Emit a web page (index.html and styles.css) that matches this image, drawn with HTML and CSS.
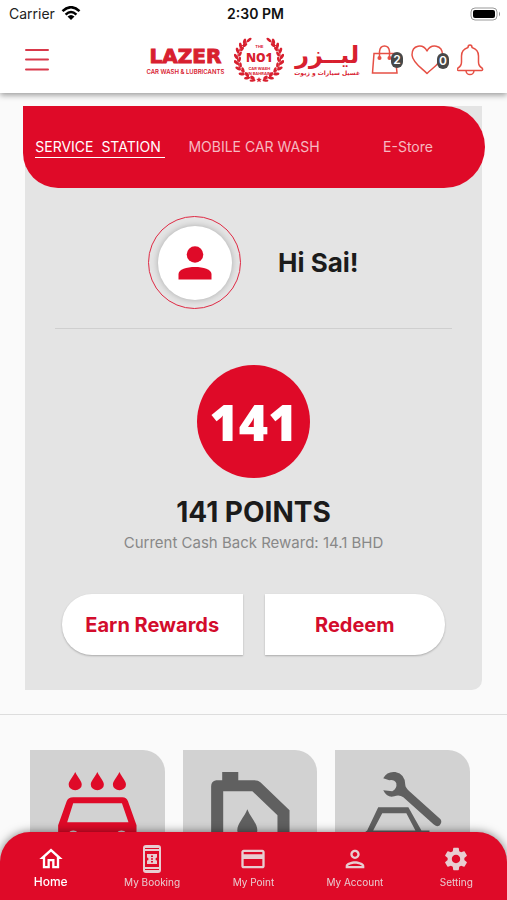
FILE: index.html
```html
<!DOCTYPE html>
<html lang="en">
<head>
<meta charset="utf-8">
<meta name="viewport" content="width=device-width, initial-scale=1">
<title>Lazer Car Wash</title>
<link rel="stylesheet" href="styles.css">
</head>
<body>
<header class="top">
  <div class="status">
    <div class="carrier">Carrier
      <svg width="20" height="15" viewBox="0 0 20 15" fill="none" stroke="#000" stroke-width="2.5"><path d="M1.500 5.200Q10-2.800 18.500 5.200M4.600 8.600Q10 3.500 15.400 8.600"/><path d="M6.500 10.500Q10 7.300 13.500 10.500L10 14Z" fill="#000" stroke="none"/></svg>
    </div>
    <time class="clock">2:30 PM</time>
    <div class="power">
      <svg width="32" height="14" viewBox="0 0 32 14"><rect x="1" y="1" width="26" height="12" rx="4" fill="none" stroke="#999"/><rect x="3" y="3" width="22" height="8" rx="2"/><path d="M29 4.500Q31 7 29 9.500Z" fill="#888"/></svg>
    </div>
  </div>
  <div class="bar">
    <button class="icon-btn menu" aria-label="Menu"><svg width="26" height="24" viewBox="0 0 26 24" stroke="#d9384a" stroke-width="2" stroke-linecap="round"><path d="M2 2H24M2 11.500H24M2 21.500H24"/></svg></button>
    <div class="brand">
      <div class="brand-en"><strong>LAZER</strong><span>CAR WASH &amp; LUBRICANTS</span></div>
      <div class="award">
        <svg class="wreath" width="50" height="46" viewBox="0 0 50 46" fill="#d8202f" stroke="#d8202f">
          <defs>
            <g id="branch">
              <path d="M16 3Q3 9 3.500 23Q5 38 21 43" fill="none" stroke-width="1"/>
              <g stroke="none">
                <ellipse cx="15" cy="3" rx="3" ry="1.400" transform="rotate(-40 15 3)"/>
                <ellipse cx="10.500" cy="4.500" rx="3" ry="1.500" transform="rotate(-75 10.500 4.500)"/>
                <ellipse cx="11" cy="8" rx="2.600" ry="1.400" transform="rotate(-35 11 8)"/>
                <ellipse cx="6.500" cy="8.500" rx="3" ry="1.500" transform="rotate(-100 6.500 8.500)"/>
                <ellipse cx="8" cy="12" rx="2.600" ry="1.400" transform="rotate(-50 8 12)"/>
                <ellipse cx="3.500" cy="13.500" rx="3" ry="1.500" transform="rotate(70 3.500 13.500)"/>
                <ellipse cx="6" cy="17" rx="2.800" ry="1.400" transform="rotate(-60 6 17)"/>
                <ellipse cx="2" cy="19.500" rx="3" ry="1.500" transform="rotate(58 2 19.500)"/>
                <ellipse cx="5.500" cy="22.500" rx="2.800" ry="1.400" transform="rotate(-75 5.500 22.500)"/>
                <ellipse cx="2.200" cy="25.500" rx="3" ry="1.500" transform="rotate(45 2.200 25.500)"/>
                <ellipse cx="6.500" cy="28" rx="2.800" ry="1.400" transform="rotate(-95 6.500 28)"/>
                <ellipse cx="4" cy="31.500" rx="3" ry="1.500" transform="rotate(30 4 31.500)"/>
                <ellipse cx="9" cy="33" rx="2.800" ry="1.400" transform="rotate(70 9 33)"/>
                <ellipse cx="7.500" cy="37" rx="3" ry="1.500" transform="rotate(10 7.500 37)"/>
                <ellipse cx="13" cy="37.500" rx="2.800" ry="1.400" transform="rotate(50 13 37.500)"/>
                <ellipse cx="13" cy="41" rx="3" ry="1.500" transform="rotate(-8 13 41)"/>
                <ellipse cx="18.500" cy="40.500" rx="2.600" ry="1.400" transform="rotate(35 18.500 40.500)"/>
                <ellipse cx="18.500" cy="43.500" rx="3" ry="1.300" transform="rotate(-5 18.500 43.500)"/>
              </g>
            </g>
          </defs>
          <use href="#branch"/><use href="#branch" transform="matrix(-1 0 0 1 50 0)"/>
          <path d="M25 40l.8 1.800 2 .2-1.500 1.300.5 2L25 44.200l-1.800 1.100.5-2L22.200 42l2-.2z" stroke="none"/>
        </svg>
        <div class="award-text"><span>THE</span><b>NO1</b><span>CAR WASH</span><span>IN BAHRAIN</span></div>
      </div>
      <div class="brand-ar" lang="ar" dir="rtl"><strong>ليــزر</strong><span>غسيل سيارات و زيوت</span></div>
    </div>
    <div class="actions">
      <button class="icon-btn bag" aria-label="Shopping bag">
        <svg width="28" height="32" viewBox="0 0 28 32" fill="none" stroke="#e65045" stroke-width="1.500"><path d="M3 9.500H24L26 29H1.500ZM8.500 14V7.500Q9 2 13.500 2T18.500 7.500V14"/><circle cx="8.500" cy="14" r="1.300" fill="#e65045"/><circle cx="18.500" cy="14" r="1.300" fill="#e65045"/></svg>
        <span class="badge">2</span>
      </button>
      <button class="icon-btn heart" aria-label="Favourites">
        <svg width="34" height="30" viewBox="0 0 34 30" fill="none" stroke="#e65045" stroke-width="1.500" stroke-linejoin="round"><path d="M16 28.500C12 24 1.500 18 1 10C1-.5 12-1.500 16 6C20-1.500 31.500-.5 31.500 10C31 18 20 24 16 28.500Z"/></svg>
        <span class="badge">0</span>
      </button>
      <button class="icon-btn bell" aria-label="Notifications">
        <svg width="28" height="32" viewBox="0 0 28 32" fill="none" stroke="#e65045" stroke-width="1.500" stroke-linejoin="round"><path d="M11 3.500Q11 1 13 1T15 3.500Q21.500 5.500 21.500 12V18Q21.500 22 25 24Q26.500 26 24.500 26.500H1.500Q-.5 26 1 24Q4.500 22 4.500 18V12Q4.500 5.500 11 3.500ZM9 27Q9.500 30.500 13 30.500T17 27"/></svg>
      </button>
    </div>
  </div>
</header>
<main>
  <section class="rewards">
    <nav class="tabs">
      <a class="tab active" href="#station">SERVICE&nbsp; STATION</a>
      <a class="tab" href="#mobile">MOBILE CAR WASH</a>
      <a class="tab" href="#store">E-Store</a>
    </nav>
    <div class="greeting">
      <div class="avatar"><div class="avatar-inner">
        <svg width="34" height="34" viewBox="0 0 34 34" fill="#df0a28"><circle cx="17" cy="8.500" r="8.300"/><path d="M.5 33.500V28C.5 18.500 33.500 18.500 33.500 28V33.500Z"/></svg>
      </div></div>
      <h1>Hi Sai!</h1>
    </div>
    <div class="score">
      <div class="disc">141</div>
      <h2>141 POINTS</h2>
      <p>Current Cash Back Reward: 14.1 BHD</p>
    </div>
    <div class="buttons">
      <button class="pill left">Earn Rewards</button>
      <button class="pill right">Redeem</button>
    </div>
  </section>
  <section class="services">
    <a class="service" href="#wash" aria-label="Car wash">
      <svg viewBox="0 0 134 134" fill="#df0a28"><path id="drop" d="M45 22C42 28 38.500 31 38.500 34.500A6.500 5.500 0 0 0 51.500 34.500C51.500 31 48 28 45 22Z"/><use href="#drop" x="22"/><use href="#drop" x="44"/><path fill-rule="evenodd" d="M43 47H92Q96 47 97.500 51L106 75V112H96V104H38V112H28V75L36.500 51Q38 47 43 47ZM43 53L37 72H98L91.500 53ZM43 80a5 5 0 1 0 .1 0ZM91 80a5 5 0 1 0 .1 0Z"/></svg>
    </a>
    <a class="service" href="#oil" aria-label="Oil change">
      <svg viewBox="0 0 134 134" fill="#606060"><path fill-rule="evenodd" d="M39 22H55V30H71Q75 30 77 32L106 60V112H28V36Q28 31 33 30H39ZM40 41V102H94V65L69 41Z"/><path d="M64 59C61 67 54 73 54 80A10 10 0 0 0 74 80C74 73 67 67 64 59Z"/></svg>
    </a>
    <a class="service" href="#repair" aria-label="Repair">
      <svg viewBox="0 0 134 134" fill="#606060"><path d="M48 28Q52 21 60 22Q70 24 70 35Q70 37 74 41L105 69Q107 72 104 75Q101 77 98 74L68 47Q64 44 59 46Q52 48 48 40L57 41Q62 38 61 33Q59 29 54 30Z"/><path fill-rule="evenodd" d="M43 57H73L86 80H94V112H82V104H36V112H24V86L32 80ZM47 63L38 80H80L71 63Z"/></svg>
    </a>
  </section>
</main>
<nav class="bottom">
  <a class="item current" href="#home"><svg viewBox="0 0 24 24"><path d="M12 5.700l5 4.500V18h-2v-6H9v6H7v-7.800l5-4.500M12 3L2 12h3v8h6v-6h2v6h6v-8h3L12 3z"/></svg>Home</a>
  <a class="item" href="#booking"><svg class="ticket" viewBox="0 0 24 28"><path fill-rule="evenodd" d="M6 0H18Q21 0 21 3V25Q21 28 18 28H6Q3 28 3 25V3Q3 0 6 0ZM5 3V4H19V3ZM5 6V22H19V6ZM5 24V25H19V24Z"/><path fill-rule="evenodd" d="M7 9H17V12.500A1.500 1.500 0 0 0 17 15.500V19H7V15.500A1.500 1.500 0 0 0 7 12.500ZM11 10.500V12H13V10.500ZM11 13.300V14.700H13V13.300ZM11 16V17.500H13V16Z"/></svg>My Booking</a>
  <a class="item" href="#point"><svg viewBox="0 0 24 24"><path d="M20 4H4c-1.100 0-2 .9-2 2v12c0 1.100.9 2 2 2h16c1.100 0 2-.9 2-2V6c0-1.100-.9-2-2-2zm0 14H4v-6h16v6zm0-10H4V6h16v2z"/></svg>My Point</a>
  <a class="item" href="#account"><svg viewBox="0 0 24 24"><path d="M12 6c1.100 0 2 .9 2 2s-.9 2-2 2-2-.9-2-2 .9-2 2-2m0 10c2.700 0 5.800 1.290 6 2H6c.23-.72 3.310-2 6-2m0-12C9.790 4 8 5.790 8 8s1.790 4 4 4 4-1.790 4-4-1.790-4-4-4zm0 10c-2.670 0-8 1.340-8 4v2h16v-2c0-2.660-5.330-4-8-4z"/></svg>My Account</a>
  <a class="item" href="#setting"><svg viewBox="0 0 24 24"><path d="M19.140 12.940c.04-.3.06-.61.060-.94 0-.32-.02-.64-.07-.94l2.030-1.580c.18-.14.23-.41.120-.61l-1.920-3.320c-.12-.22-.37-.29-.59-.22l-2.390.96c-.5-.38-1.030-.7-1.620-.94l-.36-2.540c-.04-.24-.24-.41-.48-.41h-3.840c-.24 0-.43.17-.47.410l-.36 2.540c-.59.240-1.130.570-1.620.94l-2.390-.96c-.22-.08-.47 0-.59.220L2.740 8.870c-.12.210-.08.470.12.610l2.030 1.580c-.05.300-.09.630-.09.940s.02.640.07.940l-2.030 1.580c-.18.140-.23.410-.12.610l1.920 3.320c.12.220.37.290.59.220l2.390-.96c.5.380 1.030.700 1.620.940l.36 2.540c.05.240.24.410.48.410h3.840c.24 0 .44-.17.470-.41l.36-2.540c.59-.24 1.130-.56 1.620-.94l2.390.96c.22.080.47 0 .59-.22l1.920-3.320c.12-.22.070-.47-.12-.61l-2.010-1.580zM12 15.600c-1.980 0-3.600-1.620-3.600-3.600s1.620-3.600 3.600-3.600 3.600 1.620 3.600 3.600-1.620 3.600-3.600 3.600z"/></svg>Setting</a>
</nav>
</body>
</html>
```
FILE: styles.css
```css
* { box-sizing: border-box; }
body { margin: 0; background: #fafafa; color: #1b1b1b; font-family: Inter, "Liberation Sans", sans-serif; }
a { color: inherit; text-decoration: none; }
button { border: 0; padding: 0; background: none; font: inherit; cursor: pointer; }
svg { display: block; }
h1, h2, p { margin: 0; }

.top { position: relative; background: #fff; box-shadow: 0 2px 6px rgba(0, 0, 0, .4); }
.status { display: grid; grid-template-columns: 1fr auto 1fr; align-items: center; height: 27px; padding: 0 5px 0 9px; font-size: 14px; color: #222; }
.carrier { display: flex; align-items: center; gap: 6px; }
.clock { font-weight: 600; color: #111; }
.power { justify-self: end; }
.bar { display: flex; align-items: center; height: 66px; padding: 0 22px 0 24px; }
.icon-btn { position: relative; flex: none; }
.brand { display: flex; align-items: center; gap: 10px; margin-left: auto; color: #d8202f; }
.brand-en, .brand-ar { display: flex; flex-direction: column; align-items: center; white-space: nowrap; }
.brand-en strong { font: 700 20px/24px "DejaVu Sans", sans-serif; -webkit-text-stroke: 1px #d8202f; }
.brand-en span { font-size: 6px; line-height: 8px; font-weight: 600; }
.brand-ar strong { font: 700 24px/26px "DejaVu Sans", sans-serif; }
.brand-ar span { font: 700 6px/10px "DejaVu Sans", sans-serif; }
.award { display: grid; place-items: center; }
.award > * { grid-area: 1 / 1; }
.award-text { display: flex; flex-direction: column; align-items: center; font-size: 4px; line-height: 5px; font-weight: 700; }
.award-text b { font-family: "Open Sans", sans-serif; font-size: 12px; line-height: 17px; }
.actions { display: flex; align-items: center; gap: 12px; margin-left: 11px; }
.badge { position: absolute; right: -4px; top: 8px; min-width: 12px; padding: 0 2px; border-radius: 6px; background: #484848; color: #fff; font-size: 12px; line-height: 16px; font-weight: 600; text-align: center; }

.rewards { margin: 13px 25px 0; background: #e4e4e4; border-radius: 0 0 10px 0; padding-bottom: 35px; }
.tabs { display: grid; grid-template-columns: 154px 154px 1fr; align-items: center; height: 82px; margin: 0 -3px 0 -2px; background: #df0a28; border-radius: 0 42px 42px 36px; color: rgba(255, 255, 255, .72); font-size: 14px; line-height: 20px; text-align: center; white-space: nowrap; }
.tab.active { justify-self: center; padding-right: 4px; color: #fff; border-bottom: 1px solid #fff; }
.greeting { display: flex; align-items: center; gap: 37px; margin: 0 30px; padding: 28px 0 19px 93px; border-bottom: 1px solid #cfcfcf; }
.avatar { display: grid; place-items: center; width: 93px; height: 93px; border: 1px solid #df2a44; border-radius: 50%; }
.avatar-inner { display: grid; place-items: center; width: 74px; height: 74px; border-radius: 50%; background: #fff; box-shadow: 0 0 6px rgba(0, 0, 0, .25); }
h1 { font-size: 26px; line-height: 30px; }
.score { display: flex; flex-direction: column; align-items: center; padding-top: 36px; }
.disc { display: grid; place-items: center; width: 113px; height: 113px; border-radius: 50%; background: #df0a28; color: #fff; font: 800 50px/60px "Open Sans", sans-serif; }
h2 { margin-top: 18px; font-size: 28px; line-height: 32px; }
.score p { margin-top: 5px; font-size: 15px; line-height: 20px; color: #888; }
.buttons { display: grid; grid-template-columns: 1fr 1fr; gap: 22px; padding: 41px 37px 0; }
.pill { height: 61px; background: #fff; color: #d30c2c; font-size: 20px; font-weight: 700; box-shadow: 0 1px 2px rgba(0, 0, 0, .25); }
.pill.left { border-radius: 30px 0 0 30px; }
.pill.right { border-radius: 0 30px 30px 0; }

.services { display: grid; grid-template-columns: repeat(3, 1fr); gap: 18px; margin-top: 24px; padding: 35px 37px 0 30px; border-top: 1px solid #ddd; }
.service { background: #d2d2d2; border-radius: 0 22px 0 0; }

.bottom { position: fixed; bottom: 0; left: 0; right: 0; display: grid; grid-template-columns: repeat(5, 1fr); height: 68px; padding-top: 13px; background: #df0a28; border-radius: 30px 30px 0 0; box-shadow: 0 0 10px rgba(0, 0, 0, .5); color: #e8cdd1; font-size: 10px; line-height: 16px; }
.item { display: flex; flex-direction: column; align-items: center; gap: 1px; }
.item svg { width: 28px; height: 28px; fill: currentColor; }
.item.current { color: #fff; font-size: 12px; font-weight: 500; }
```
